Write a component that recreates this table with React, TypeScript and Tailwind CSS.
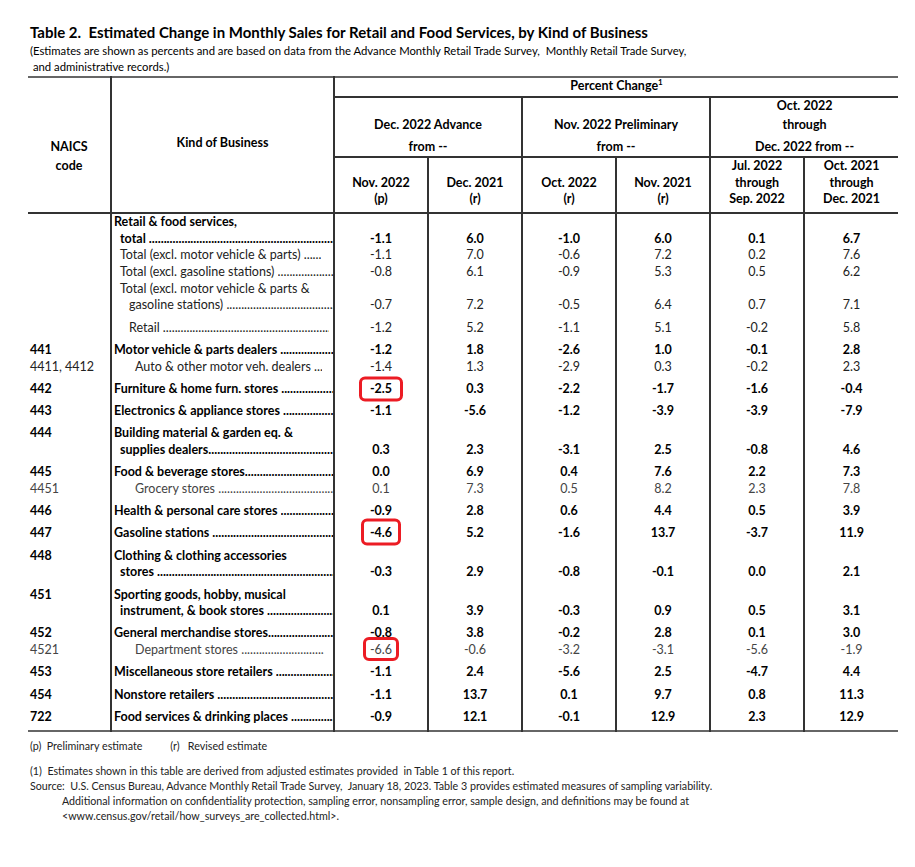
import React from 'react';

type Line = { text: string; indent?: string; dots?: boolean; end?: string };
type Row = {
    code: string;
    lines: Line[];
    values: string[];
    bold?: boolean;
    gap?: boolean;
    muted?: boolean;
    mark?: string;
};

const rows: Row[] = [
    { code: '', lines: [{ text: 'Retail & food services,' }, { text: 'total ', indent: 'pl-[6px]', dots: true }], values: ['-1.1', '6.0', '-1.0', '6.0', '0.1', '6.7'], bold: true },
    { code: '', lines: [{ text: 'Total (excl. motor vehicle & parts) ', indent: 'pl-[6px]', dots: true, end: 'mr-[12px]' }], values: ['-1.1', '7.0', '-0.6', '7.2', '0.2', '7.6'] },
    { code: '', lines: [{ text: 'Total (excl. gasoline stations) ', indent: 'pl-[6px]', dots: true }], values: ['-0.8', '6.1', '-0.9', '5.3', '0.5', '6.2'] },
    { code: '', lines: [{ text: 'Total (excl. motor vehicle & parts &', indent: 'pl-[6px]' }, { text: 'gasoline stations) ', indent: 'pl-[15px]', dots: true }], values: ['-0.7', '7.2', '-0.5', '6.4', '0.7', '7.1'] },
    { code: '', lines: [{ text: 'Retail ', indent: 'pl-[15px]', dots: true, end: 'mr-[4px]' }], values: ['-1.2', '5.2', '-1.1', '5.1', '-0.2', '5.8'], gap: true },
    { code: '441', lines: [{ text: 'Motor vehicle & parts dealers ', dots: true }], values: ['-1.2', '1.8', '-2.6', '1.0', '-0.1', '2.8'], bold: true, gap: true },
    { code: '4411, 4412', lines: [{ text: 'Auto & other motor veh. dealers ', indent: 'pl-[21px]', dots: true, end: 'mr-[11px]' }], values: ['-1.4', '1.3', '-2.9', '0.3', '-0.2', '2.3'] },
    { code: '442', lines: [{ text: 'Furniture & home furn. stores ', dots: true }], values: ['-2.5', '0.3', '-2.2', '-1.7', '-1.6', '-0.4'], bold: true, gap: true, mark: 'w-[44px] h-[25px]' },
    { code: '443', lines: [{ text: 'Electronics & appliance stores ', dots: true }], values: ['-1.1', '-5.6', '-1.2', '-3.9', '-3.9', '-7.9'], bold: true, gap: true },
    { code: '444', lines: [{ text: 'Building material & garden eq. &' }, { text: 'supplies dealers', indent: 'pl-[6px]', dots: true }], values: ['0.3', '2.3', '-3.1', '2.5', '-0.8', '4.6'], bold: true, gap: true },
    { code: '445', lines: [{ text: 'Food & beverage stores', dots: true }], values: ['0.0', '6.9', '0.4', '7.6', '2.2', '7.3'], bold: true, gap: true },
    { code: '4451', lines: [{ text: 'Grocery stores ', indent: 'pl-[21px]', dots: true }], values: ['0.1', '7.3', '0.5', '8.2', '2.3', '7.8'], muted: true },
    { code: '446', lines: [{ text: 'Health & personal care stores ', dots: true }], values: ['-0.9', '2.8', '0.6', '4.4', '0.5', '3.9'], bold: true, gap: true },
    { code: '447', lines: [{ text: 'Gasoline stations ', dots: true }], values: ['-4.6', '5.2', '-1.6', '13.7', '-3.7', '11.9'], bold: true, gap: true, mark: 'w-[40px] h-[27px] mt-[-2px]' },
    { code: '448', lines: [{ text: 'Clothing & clothing accessories' }, { text: 'stores ', indent: 'pl-[6px]', dots: true }], values: ['-0.3', '2.9', '-0.8', '-0.1', '0.0', '2.1'], bold: true, gap: true },
    { code: '451', lines: [{ text: 'Sporting goods, hobby, musical' }, { text: 'instrument, & book stores ', indent: 'pl-[6px]', dots: true }], values: ['0.1', '3.9', '-0.3', '0.9', '0.5', '3.1'], bold: true, gap: true },
    { code: '452', lines: [{ text: 'General merchandise stores', dots: true }], values: ['-0.8', '3.8', '-0.2', '2.8', '0.1', '3.0'], bold: true, gap: true },
    { code: '4521', lines: [{ text: 'Department stores ', indent: 'pl-[21px]', dots: true, end: 'mr-[9px]' }], values: ['-6.6', '-0.6', '-3.2', '-3.1', '-5.6', '-1.9'], muted: true, mark: 'w-[36px] h-[24px] mt-[-1px]' },
    { code: '453', lines: [{ text: 'Miscellaneous store retailers ', dots: true }], values: ['-1.1', '2.4', '-5.6', '2.5', '-4.7', '4.4'], bold: true, gap: true },
    { code: '454', lines: [{ text: 'Nonstore retailers ', dots: true }], values: ['-1.1', '13.7', '0.1', '9.7', '0.8', '11.3'], bold: true, gap: true },
    { code: '722', lines: [{ text: 'Food services & drinking places ', dots: true }], values: ['-0.9', '12.1', '-0.1', '12.9', '2.3', '12.9'], bold: true, gap: true },
];

const leader = '.'.repeat(160);
const line = 'border-[#333]';

function SubHead({ lines }: { lines: string[] }) {
    return (
        <div className="flex flex-col items-center">
            {lines.map((t) => (
                <div key={t}>{t}</div>
            ))}
        </div>
    );
}

export default function App() {
    return (
        <div className="min-h-[867px] w-[915px] bg-white text-black font-['Lato',sans-serif]">
            <div className="pl-[30px] pt-[22px]">
                <h1 className="text-[15px] font-bold leading-[20px]">
                    Table 2.&nbsp; Estimated Change in Monthly Sales for Retail and Food Services, by Kind of Business
                </h1>
                <p className="mt-[1px] text-[11.3px] leading-[16px] whitespace-pre">
                    {'(Estimates are shown as percents and are based on data from the Advance Monthly Retail Trade Survey,  Monthly Retail Trade Survey,\n and administrative records.)'}
                </p>
            </div>

            <table className="ml-[28px] mt-[1px] w-[870px] table-fixed border-collapse text-[12.5px] leading-[16.65px]">
                <colgroup>
                    <col className="w-[83px]" />
                    <col className="w-[223px]" />
                    <col className="w-[94px]" />
                    <col className="w-[94px]" />
                    <col className="w-[94px]" />
                    <col className="w-[94px]" />
                    <col className="w-[94px]" />
                    <col className="w-[94px]" />
                </colgroup>
                <thead className="font-bold">
                    <tr className="border-t-2 border-[#666]">
                        <td rowSpan={3} className={`border-b-2 ${line} p-0 pt-[59px] align-top text-center leading-[19px]`}>
                            NAICS
                            <br />
                            code
                        </td>
                        <td rowSpan={3} className={`border-l-2 border-b-2 ${line} p-0 pt-[57px] align-top text-center`}>
                            Kind of Business
                        </td>
                        <td colSpan={6} className={`h-[19px] border-l-2 border-b-2 ${line} p-0 text-center`}>
                            Percent Change<span className="relative top-[-5px] text-[8px]">1</span>
                        </td>
                    </tr>
                    <tr>
                        <td colSpan={2} className={`h-[59px] border-l-2 border-b-2 ${line} p-0 pb-[0.5px] align-bottom`}>
                            <div className="flex flex-col items-center gap-[5.5px]">
                                <div>Dec. 2022 Advance</div>
                                <div>from --</div>
                            </div>
                        </td>
                        <td colSpan={2} className={`border-l-2 border-b-2 ${line} p-0 pb-[0.5px] align-bottom`}>
                            <div className="flex flex-col items-center gap-[5.5px]">
                                <div>Nov. 2022 Preliminary</div>
                                <div>from --</div>
                            </div>
                        </td>
                        <td colSpan={2} className={`border-l-2 border-b-2 ${line} p-0 pb-[0.5px] align-bottom`}>
                            <div className="flex flex-col items-center">
                                <div>Oct. 2022</div>
                                <div className="mt-[2.5px]">through</div>
                                <div className="mt-[5.5px]">Dec. 2022 from --</div>
                            </div>
                        </td>
                    </tr>
                    <tr>
                        {[
                            ['Nov. 2022', '(p)'],
                            ['Dec. 2021', '(r)'],
                            ['Oct. 2022', '(r)'],
                            ['Nov. 2021', '(r)'],
                            ['Jul. 2022', 'through', 'Sep. 2022'],
                            ['Oct. 2021', 'through', 'Dec. 2021'],
                        ].map((h, i) => (
                            <td key={i} className={`h-[55.5px] border-l-2 border-b-2 ${line} p-0 pb-[4px] align-bottom`}>
                                <SubHead lines={h} />
                            </td>
                        ))}
                    </tr>
                </thead>
                <tbody className="border-b-2 border-[#666]">
                    {rows.map((r, ri) => {
                        const pad = `${r.gap ? 'pt-[5.6px]' : 'pt-0'} ${ri === rows.length - 1 ? 'pb-[5px]' : 'pb-0'}`;
                        const weight = r.bold ? 'font-bold' : 'font-normal';
                        const tone = r.muted ? 'text-[#444]' : r.bold ? 'text-black' : 'text-[#222]';
                        return (
                            <tr key={ri} className={`${weight} ${tone}`}>
                                <td className={`${pad} pl-[2px] pr-0 align-top whitespace-nowrap`}>{r.code}</td>
                                <td className={`${pad} border-l-2 ${line} pl-[2px] pr-0 align-top`}>
                                    {r.lines.map((l, li) => (
                                        <div key={li} className={`flex ${l.indent ?? ''} ${l.end ?? ''}`}>
                                            <span className="whitespace-pre">{l.text}</span>
                                            {l.dots && <span className="min-w-0 flex-1 overflow-hidden whitespace-nowrap">{leader}</span>}
                                        </div>
                                    ))}
                                </td>
                                {r.values.map((v, vi) => (
                                    <td key={vi} className={`${pad} border-l-2 ${line} p-0 text-center align-bottom`}>
                                        <span className="relative inline-block">
                                            {v}
                                            {r.mark && vi === 0 && (
                                                <span className={`absolute left-1/2 top-1/2 -translate-x-1/2 -translate-y-1/2 rounded-[6px] border-[3px] border-[#ec1c24] ${r.mark}`} />
                                            )}
                                        </span>
                                    </td>
                                ))}
                            </tr>
                        );
                    })}
                </tbody>
            </table>

            <div className="pl-[30px] pt-[6px] text-[10.7px] leading-[15px] text-[#222]">
                <div className="whitespace-pre">{'(p)  Preliminary estimate'}<span className="inline-block w-[28px]" />{'(r)   Revised estimate'}</div>
                <div className="mt-[10px]">(1)&nbsp; Estimates shown in this table are derived from adjusted estimates provided&nbsp; in Table 1 of this report.</div>
                <div>Source:&nbsp; U.S. Census Bureau, Advance Monthly Retail Trade Survey,&nbsp; January 18, 2023. Table 3 provides estimated measures of sampling variability.</div>
                <div className="pl-[32px]">Additional information on confidentiality protection, sampling error, nonsampling error, sample design, and definitions may be found at</div>
                <div className="pl-[32px]">&lt;www.census.gov/retail/how_surveys_are_collected.html&gt;.</div>
            </div>
        </div>
    );
}
